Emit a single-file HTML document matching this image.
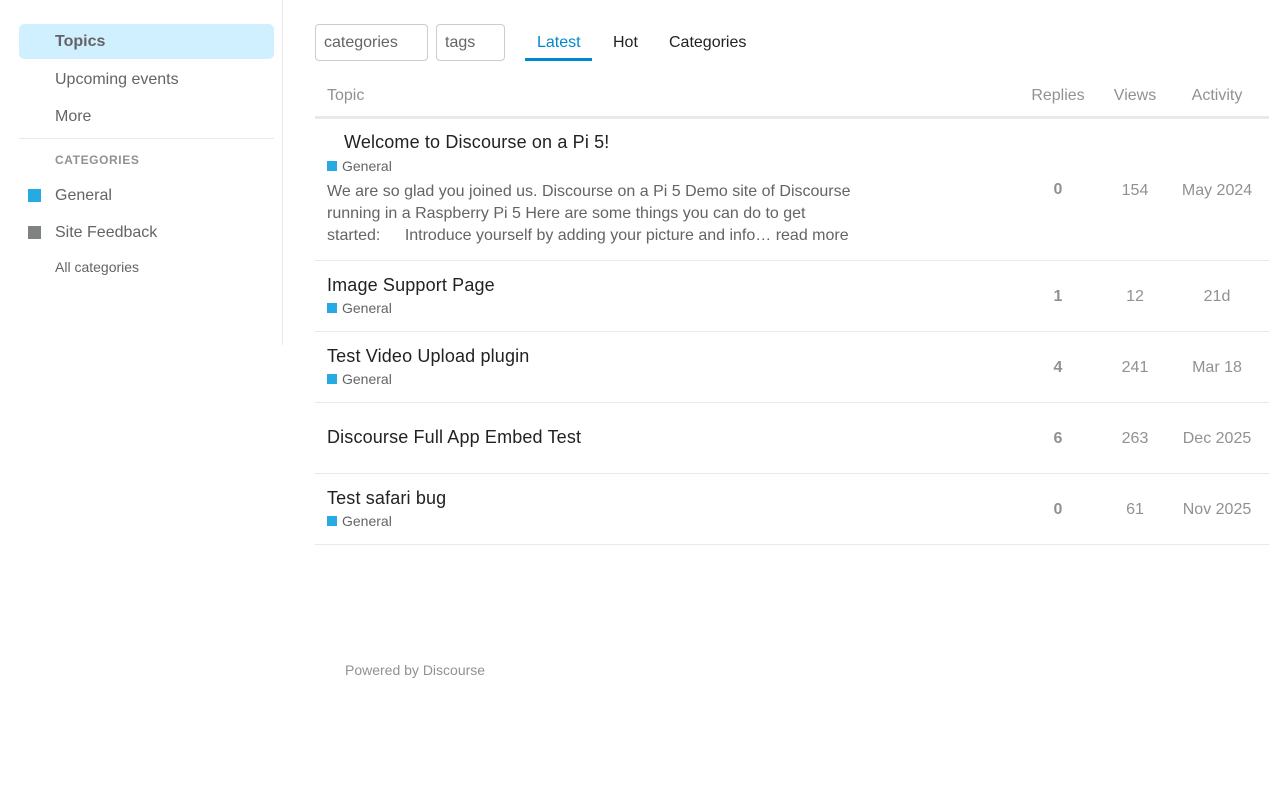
<!DOCTYPE html>
<html><head><meta charset="utf-8"><style>
*{margin:0;padding:0;box-sizing:border-box}
body{width:1280px;height:800px;background:#fff;font-family:"Liberation Sans",Arial,sans-serif;position:relative;overflow:hidden;color:#222}
.a{position:absolute;white-space:nowrap}
.c{transform:translateX(-50%)}
.sq{position:absolute}
.hl{position:absolute;left:315px;width:954px;background:#e9e9e9;height:1px}
.t{font-size:18px;color:#222;line-height:22px;letter-spacing:0.15px}
.g{font-size:14px;color:#646464;line-height:16px}
.n{font-size:16px;color:#919191;line-height:20px}
</style></head><body>
<div class="sq" style="left:19px;top:24px;width:255px;height:35px;background:#d1f0ff;border-radius:5px"></div>
<div class="a" style="left:55px;top:32px;font-size:16px;font-weight:bold;color:#646464;line-height:20px">Topics</div>
<div class="a" style="left:55px;top:70px;font-size:16px;color:#646464;line-height:20px">Upcoming events</div>
<div class="a" style="left:55px;top:107px;font-size:16px;color:#646464;line-height:20px">More</div>
<div class="sq" style="left:19px;top:138px;width:255px;height:1px;background:#e9e9e9"></div>
<div class="a" style="left:55px;top:152px;font-size:12px;font-weight:bold;color:#919191;letter-spacing:0.6px;line-height:16px">CATEGORIES</div>
<div class="sq" style="left:28px;top:189px;width:13px;height:13px;background:#25aae1"></div>
<div class="a" style="left:55px;top:186px;font-size:16px;color:#646464;line-height:20px">General</div>
<div class="sq" style="left:28px;top:226px;width:13px;height:13px;background:#808281"></div>
<div class="a" style="left:55px;top:223px;font-size:16px;color:#646464;line-height:20px">Site Feedback</div>
<div class="a" style="left:55px;top:259px;font-size:14px;color:#646464;line-height:16px">All categories</div>
<div class="sq" style="left:282px;top:0;width:1px;height:345px;background:#e9e9e9"></div>
<div class="sq" style="left:315px;top:24px;width:113px;height:37px;border:1px solid #ccc;border-radius:4px"></div>
<div class="a" style="left:324px;top:33px;font-size:16px;color:#646464;line-height:20px">categories</div>
<div class="sq" style="left:436px;top:24px;width:69px;height:37px;border:1px solid #ccc;border-radius:4px"></div>
<div class="a" style="left:445px;top:33px;font-size:16px;color:#646464;line-height:20px">tags</div>
<div class="a" style="left:537px;top:33px;font-size:16px;color:#0088cc;line-height:20px">Latest</div>
<div class="sq" style="left:525px;top:58px;width:67px;height:3px;background:#0088cc"></div>
<div class="a" style="left:613px;top:33px;font-size:16px;color:#222;line-height:20px">Hot</div>
<div class="a" style="left:669px;top:33px;font-size:16px;color:#222;line-height:20px">Categories</div>
<div class="a n" style="left:327px;top:86px">Topic</div>
<div class="a n c" style="left:1058px;top:86px">Replies</div>
<div class="a n c" style="left:1135px;top:86px">Views</div>
<div class="a n c" style="left:1217px;top:86px">Activity</div>
<div class="hl" style="top:116px;height:3px"></div>
<div class="a t" style="left:344px;top:131px">Welcome to Discourse on a Pi 5!</div>
<div class="sq" style="left:327px;top:161px;width:10px;height:10px;background:#25aae1"></div>
<div class="a g" style="left:342px;top:158px">General</div>
<div class="a" style="left:327px;top:181px;font-size:16px;color:#646464;line-height:22px">We are so glad you joined us. Discourse on a Pi 5 Demo site of Discourse<br>running in a Raspberry Pi 5 Here are some things you can do to get<br>started: <span style="display:inline-block;width:20px"></span>Introduce yourself by adding your picture and info… read more</div>
<div class="a n c" style="left:1058px;top:180px;font-weight:bold">0</div>
<div class="a n c" style="left:1135px;top:181px">154</div>
<div class="a n c" style="left:1217px;top:181px">May 2024</div>
<div class="hl" style="top:260px"></div>
<div class="a t" style="left:327px;top:274px">Image Support Page</div>
<div class="sq" style="left:327px;top:303px;width:10px;height:10px;background:#25aae1"></div>
<div class="a g" style="left:342px;top:300px">General</div>
<div class="a n c" style="left:1058px;top:287px;font-weight:bold">1</div>
<div class="a n c" style="left:1135px;top:287px">12</div>
<div class="a n c" style="left:1217px;top:287px">21d</div>
<div class="hl" style="top:331px"></div>
<div class="a t" style="left:327px;top:345px">Test Video Upload plugin</div>
<div class="sq" style="left:327px;top:374px;width:10px;height:10px;background:#25aae1"></div>
<div class="a g" style="left:342px;top:371px">General</div>
<div class="a n c" style="left:1058px;top:358px;font-weight:bold">4</div>
<div class="a n c" style="left:1135px;top:358px">241</div>
<div class="a n c" style="left:1217px;top:358px">Mar 18</div>
<div class="hl" style="top:402px"></div>
<div class="a t" style="left:327px;top:426px">Discourse Full App Embed Test</div>
<div class="a n c" style="left:1058px;top:429px;font-weight:bold">6</div>
<div class="a n c" style="left:1135px;top:429px">263</div>
<div class="a n c" style="left:1217px;top:429px">Dec 2025</div>
<div class="hl" style="top:473px"></div>
<div class="a t" style="left:327px;top:487px">Test safari bug</div>
<div class="sq" style="left:327px;top:516px;width:10px;height:10px;background:#25aae1"></div>
<div class="a g" style="left:342px;top:513px">General</div>
<div class="a n c" style="left:1058px;top:500px;font-weight:bold">0</div>
<div class="a n c" style="left:1135px;top:500px">61</div>
<div class="a n c" style="left:1217px;top:500px">Nov 2025</div>
<div class="hl" style="top:544px"></div>
<div class="a" style="left:345px;top:662px;font-size:14px;color:#919191;line-height:16px">Powered by Discourse</div>
</body></html>
